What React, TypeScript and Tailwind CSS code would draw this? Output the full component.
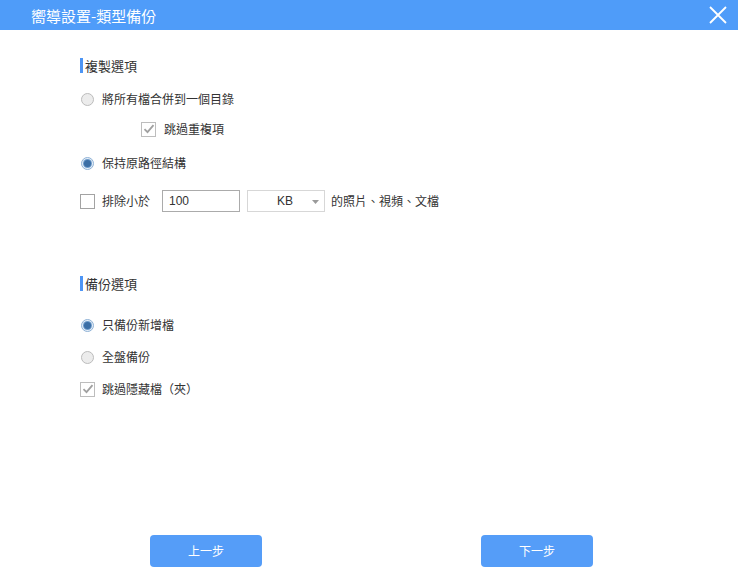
import React from "react";

const font = { fontFamily: '"Noto Sans CJK TC", "Noto Sans", sans-serif' };

function Radio({ checked }: { checked?: boolean }) {
  return checked ? (
    <span className="w-[13px] h-[13px] rounded-full border border-[#8fb2d6] bg-[#e6eef7] flex items-center justify-center shrink-0">
      <span className="w-[7px] h-[7px] rounded-full bg-[#3b6ea5] ring-1 ring-[#6d9bcb]" />
    </span>
  ) : (
    <span className="w-[13px] h-[13px] rounded-full border border-[#bcbcbc] bg-[#ececec] shrink-0" />
  );
}

function Check({ checked }: { checked?: boolean }) {
  return (
    <span
      className={`w-[15px] h-[15px] border ${checked ? "border-[#bdbdbd]" : "border-[#a3a3a3]"} bg-white flex items-center justify-center shrink-0`}
    >
      {checked && (
        <svg width="12" height="12" viewBox="0 0 12 12">
          <path d="M1.5 6.2 L4.5 9.2 L10.5 2.2" fill="none" stroke="#a0a0a0" strokeWidth="1.8" />
        </svg>
      )}
    </span>
  );
}

function SectionHead({ text }: { text: string }) {
  return (
    <div className="flex items-center h-[16px]">
      <span className="w-[3px] h-[15px] bg-[#4d95f5] mr-[2px]" />
      <span className="text-[13px] text-[#333] leading-none">{text}</span>
    </div>
  );
}

export default function App() {
  return (
    <div className="w-[738px] h-[588px] bg-white flex flex-col" style={font}>
      <div className="h-[30px] bg-[#4f9cf9] flex items-center justify-between pl-[31px] pr-[11px] shrink-0">
        <span className="text-white text-[15px] leading-none">嚮導設置-類型備份</span>
        <svg width="18" height="18" viewBox="0 0 18 18">
          <path d="M1 1 L17 17 M17 1 L1 17" stroke="white" strokeWidth="1.8" />
        </svg>
      </div>
      <div className="flex flex-col pl-[80px] text-[12px] text-[#333] flex-1">
        <div className="mt-[27px]">
          <SectionHead text="複製選項" />
        </div>
        <div className="mt-[16px] h-[20px] flex items-center gap-[8px] pl-[1px]">
          <Radio />
          <span>將所有檔合併到一個目錄</span>
        </div>
        <div className="mt-[10px] h-[20px] flex items-center gap-[8px] pl-[61px]">
          <Check checked />
          <span>跳過重複項</span>
        </div>
        <div className="mt-[14px] h-[20px] flex items-center gap-[8px] pl-[1px]">
          <Radio checked />
          <span>保持原路徑結構</span>
        </div>
        <div className="mt-[17px] h-[22px] flex items-center">
          <Check />
          <span className="ml-[7px]">排除小於</span>
          <div className="ml-[12px] w-[78px] h-[22px] border border-[#ababab] flex items-center pl-[6px] text-[12px]" style={{ fontFamily: '"Liberation Sans", sans-serif' }}>
            100
          </div>
          <div className="ml-[7px] w-[78px] h-[22px] border border-[#d7d7d7] flex items-center relative" style={{ fontFamily: '"Liberation Sans", sans-serif' }}>
            <span className="absolute left-[29px]">KB</span>
            <svg className="absolute left-[64px] top-[9px]" width="7" height="4" viewBox="0 0 7 4">
              <path d="M0 0 L7 0 L3.5 4 Z" fill="#9a9a9a" />
            </svg>
          </div>
          <span className="ml-[6px]">的照片、視頻、文檔</span>
        </div>
        <div className="mt-[63px]">
          <SectionHead text="備份選項" />
        </div>
        <div className="mt-[24px] h-[20px] flex items-center gap-[8px] pl-[1px]">
          <Radio checked />
          <span>只備份新增檔</span>
        </div>
        <div className="mt-[12px] h-[20px] flex items-center gap-[8px] pl-[1px]">
          <Radio />
          <span>全盤備份</span>
        </div>
        <div className="mt-[12px] h-[20px] flex items-center gap-[7px]">
          <Check checked />
          <span>跳過隱藏檔（夾）</span>
        </div>
      </div>
      <div className="flex pl-[150px] pb-[21px] gap-[219px] shrink-0">
        <button className="w-[112px] h-[32px] rounded-[4px] bg-[#559df8] text-white text-[12px]">上一步</button>
        <button className="w-[112px] h-[32px] rounded-[4px] bg-[#559df8] text-white text-[12px]">下一步</button>
      </div>
    </div>
  );
}
